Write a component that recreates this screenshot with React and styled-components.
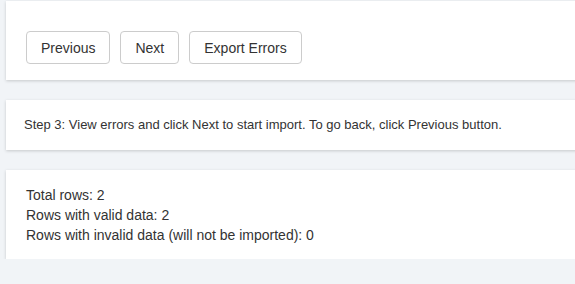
import React from 'react';
import styled, { createGlobalStyle } from 'styled-components';

const GlobalStyle = createGlobalStyle`
  html, body {
    margin: 0;
    background: #f1f4f7;
    overflow: hidden;
  }
  body {
    font-family: "Liberation Sans", Arial, sans-serif;
    font-size: 14px;
    color: #333;
  }
`;

const Page = styled.div`
  padding: 1px 0 0 6px;
  display: flex;
  flex-direction: column;
  gap: 20px;
`;

const Panel = styled.section`
  background: #fff;
  margin-right: -20px;
  box-shadow: 0 1px 3px rgba(0, 0, 0, 0.18);
  padding: ${(p) => p.$pad || '15px 20px'};
  font-size: ${(p) => p.$size || '14px'};
  line-height: 20px;
`;

const Toolbar = styled.div`
  display: flex;
  gap: 10px;
`;

const Button = styled.button`
  font-family: inherit;
  font-size: 14px;
  color: #333;
  background: #fff;
  border: 1px solid #ccc;
  border-radius: 4px;
  height: 33px;
  padding: 0 14px;
  cursor: pointer;
`;

const Line = styled.div``;

const App = () => {
  return (
    <>
      <GlobalStyle />
      <Page>
        <Panel $pad="30px 20px 16px">
          <Toolbar>
            <Button>Previous</Button>
            <Button>Next</Button>
            <Button>Export Errors</Button>
          </Toolbar>
        </Panel>
        <Panel $pad="15px 18px" $size="13px">
          Step 3: View errors and click Next to start import. To go back, click Previous button.
        </Panel>
        <Panel $pad="15px 20px 14px">
          <Line>Total rows: 2</Line>
          <Line>Rows with valid data: 2</Line>
          <Line>Rows with invalid data (will not be imported): 0</Line>
        </Panel>
      </Page>
    </>
  );
};

export default App;
